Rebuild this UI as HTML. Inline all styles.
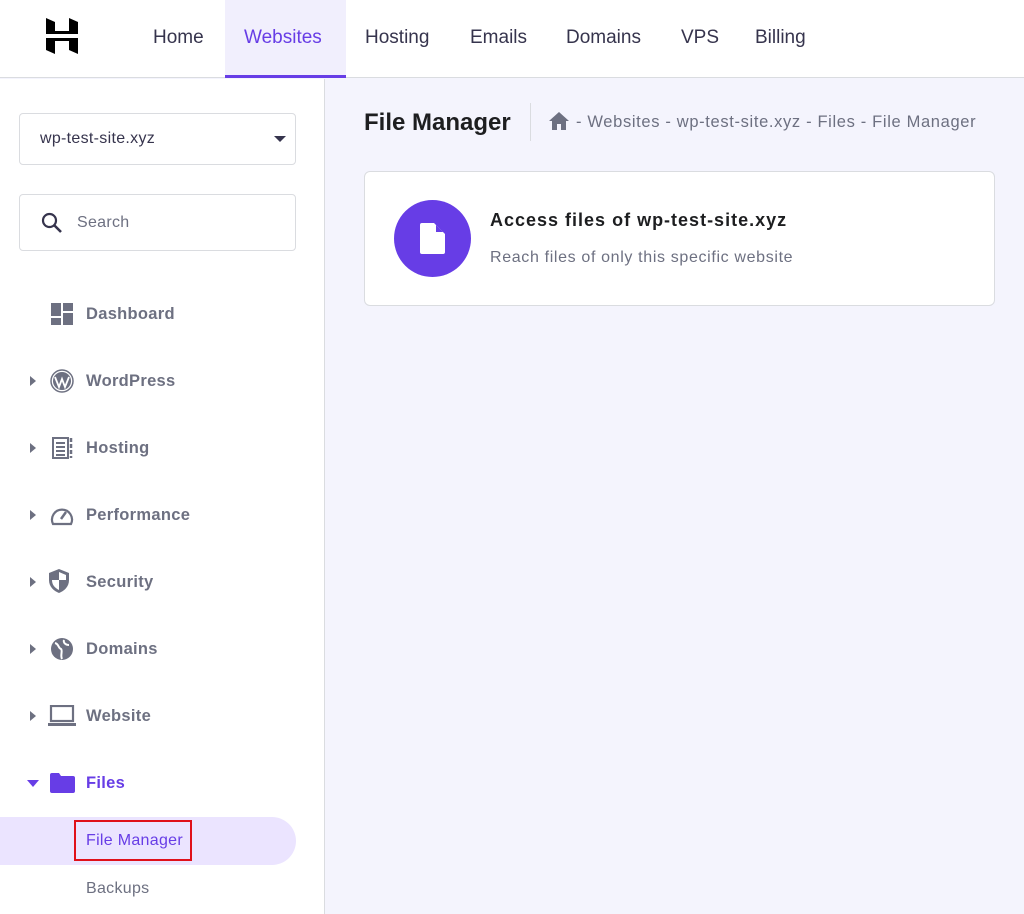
<!DOCTYPE html>
<html><head><meta charset="utf-8"><style>
*{margin:0;padding:0;box-sizing:border-box}
body{width:1024px;height:914px;overflow:hidden;font-family:"Liberation Sans",sans-serif;background:#f4f4fd;position:relative;color:#2f1c6a}
.abs{position:absolute}
.top{left:0;top:0;width:1024px;height:78px;background:#fff;border-bottom:1px solid #dadce0}
.nav{top:2px;height:78px;line-height:72px;font-size:19px;color:#36344d}
.side{left:0;top:79px;width:325px;height:835px;background:#fff;border-right:1px solid #dadce0}
.item{left:86px;font-size:16.5px;font-weight:bold;color:#6d7081;letter-spacing:0.3px;margin-top:1px}
.arr{left:30px;width:0;height:0;border-top:5px solid transparent;border-bottom:5px solid transparent;border-left:6px solid #6d7081}
</style></head><body>
<div class="abs top"></div>
<svg class="abs" style="left:46px;top:18px" width="32" height="36" viewBox="0 0 32 36"><path d="M0 0L9 4V13L23 13V0L32 4V16H0Z M0 20H32V36L23 32V23L9 23V36L0 32Z" fill="#000"/></svg>
<div class="abs nav" style="left:153px">Home</div>
<div class="abs" style="left:225px;top:0;width:121px;height:78px;background:#f1effd;border-bottom:3px solid #673de6"></div>
<div class="abs nav" style="left:244px;color:#673de6">Websites</div>
<div class="abs nav" style="left:365px">Hosting</div>
<div class="abs nav" style="left:470px">Emails</div>
<div class="abs nav" style="left:566px">Domains</div>
<div class="abs nav" style="left:681px">VPS</div>
<div class="abs nav" style="left:755px">Billing</div>

<div class="abs side"></div>
<div class="abs" style="left:19px;top:113px;width:277px;height:52px;border:1px solid #dadce0;border-radius:4px;background:#fff"></div>
<div class="abs" style="left:40px;top:130px;font-size:16px;color:#36344d;letter-spacing:0.3px">wp-test-site.xyz</div>
<div class="abs" style="left:274px;top:136px;border-left:6px solid transparent;border-right:6px solid transparent;border-top:6px solid #36344d"></div>
<div class="abs" style="left:19px;top:194px;width:277px;height:57px;border:1px solid #dadce0;border-radius:4px;background:#fff"></div>
<svg class="abs" style="left:40px;top:211px" width="24" height="24" viewBox="0 0 24 24"><circle cx="9.5" cy="9.5" r="6.5" stroke="#36344d" stroke-width="2.2" fill="none"/><path d="M14 14L21 21" stroke="#36344d" stroke-width="2.6"/></svg>
<div class="abs" style="left:77px;top:214px;font-size:16px;color:#6d7081;letter-spacing:0.3px">Search</div>

<svg class="abs" style="left:51px;top:303px" width="22" height="22"><rect x="0" y="0" width="10" height="13" fill="#6d7081"/><rect x="12" y="0" width="10" height="8" fill="#6d7081"/><rect x="0" y="15" width="10" height="7" fill="#6d7081"/><rect x="12" y="10" width="10" height="12" fill="#6d7081"/></svg>
<div class="abs item" style="top:304px">Dashboard</div>

<div class="abs arr" style="top:376px"></div>
<svg class="abs" style="left:50px;top:369px" width="24" height="24" viewBox="0 0 24 24"><circle cx="12" cy="12" r="11" fill="none" stroke="#6d7081" stroke-width="1.5"/><circle cx="12" cy="12" r="9" fill="#6d7081"/><path d="M5 8L9 18L12 10L15 18L19 8" stroke="#fff" stroke-width="1.8" fill="none"/></svg>
<div class="abs item" style="top:371px">WordPress</div>

<div class="abs arr" style="top:443px"></div>
<svg class="abs" style="left:52px;top:437px" width="22" height="22"><rect x="1" y="1" width="15" height="20" fill="none" stroke="#6d7081" stroke-width="2"/><path d="M4 6H13M4 10H13M4 14H13M4 18H13" stroke="#6d7081" stroke-width="2"/><path d="M19 1V21" stroke="#6d7081" stroke-width="2.5" stroke-dasharray="4 2"/></svg>
<div class="abs item" style="top:438px">Hosting</div>

<div class="abs arr" style="top:510px"></div>
<svg class="abs" style="left:50px;top:504px" width="24" height="22" viewBox="0 0 24 22"><path d="M3 20A10 10 0 1 1 21 20Z" fill="none" stroke="#6d7081" stroke-width="2.2"/><path d="M11 15L16 8" stroke="#6d7081" stroke-width="2.5"/></svg>
<div class="abs item" style="top:505px">Performance</div>

<div class="abs arr" style="top:577px"></div>
<svg class="abs" style="left:48px;top:568px" width="22" height="26" viewBox="0 0 22 26"><path d="M11 1L21 5V12C21 19 16 23 11 25C6 23 1 19 1 12V5Z" fill="#6d7081"/><path d="M11 4L18 7V12H11ZM11 12V22C7 20 4 17 4 12Z" fill="#fff"/></svg>
<div class="abs item" style="top:572px">Security</div>

<div class="abs arr" style="top:644px"></div>
<svg class="abs" style="left:50px;top:637px" width="24" height="24" viewBox="0 0 24 24"><circle cx="12" cy="12" r="11" fill="#6d7081"/><path d="M5 6C9 7 8 11 11 12C13 14 10 18 12 22M14 3C13 6 16 8 19 8" stroke="#fff" stroke-width="2" fill="none"/></svg>
<div class="abs item" style="top:639px">Domains</div>

<div class="abs arr" style="top:711px"></div>
<svg class="abs" style="left:48px;top:705px" width="28" height="22"><rect x="3" y="1" width="22" height="15" fill="none" stroke="#6d7081" stroke-width="2.2"/><rect x="0" y="18" width="28" height="3" fill="#6d7081"/></svg>
<div class="abs item" style="top:706px">Website</div>

<div class="abs" style="left:27px;top:780px;border-left:6px solid transparent;border-right:6px solid transparent;border-top:7px solid #673de6"></div>
<svg class="abs" style="left:50px;top:773px" width="25" height="20"><path d="M0 2Q0 0 2 0H9L11 3H23Q25 3 25 5V18Q25 20 23 20H2Q0 20 0 18Z" fill="#673de6"/></svg>
<div class="abs item" style="top:773px;color:#673de6">Files</div>

<div class="abs" style="left:0;top:817px;width:296px;height:48px;background:#ebe4ff;border-radius:0 24px 24px 0"></div>
<div class="abs" style="left:74px;top:820px;width:118px;height:41px;border:2px solid #e0101a"></div>
<div class="abs" style="left:86px;top:832px;font-size:16px;color:#673de6;letter-spacing:0.3px">File Manager</div>
<div class="abs" style="left:86px;top:880px;font-size:16px;color:#6d7081;letter-spacing:0.3px">Backups</div>

<div class="abs" style="left:364px;top:109px;font-size:24px;font-weight:bold;color:#1d1e20">File Manager</div>
<div class="abs" style="left:530px;top:103px;width:1px;height:38px;background:#dadce0"></div>
<svg class="abs" style="left:549px;top:112px" width="20" height="18"><path d="M10 0L20 9H17V18H12V12H8V18H3V9H0Z" fill="#6d7081"/></svg>
<div class="abs" style="left:576px;top:113px;font-size:16.5px;color:#6d7081;letter-spacing:0.65px">- Websites - wp-test-site.xyz - Files - File Manager</div>

<div class="abs" style="left:364px;top:171px;width:631px;height:135px;background:#fff;border:1px solid #dadce0;border-radius:6px"></div>
<div class="abs" style="left:394px;top:200px;width:77px;height:77px;border-radius:50%;background:#673de6"></div>
<svg class="abs" style="left:419px;top:222px" width="27" height="33" viewBox="0 0 27 33"><path d="M3 1H15L26 12V30Q26 32 24 32H3Q1 32 1 30V3Q1 1 3 1Z" fill="#fff"/><path d="M17 3L24 10H17Z" fill="#673de6"/></svg>
<div class="abs" style="left:490px;top:210px;font-size:18px;font-weight:bold;color:#1d1e20;letter-spacing:1px">Access files of wp-test-site.xyz</div>
<div class="abs" style="left:490px;top:249px;font-size:16px;color:#6d7081;letter-spacing:0.65px">Reach files of only this specific website</div>
</body></html>
